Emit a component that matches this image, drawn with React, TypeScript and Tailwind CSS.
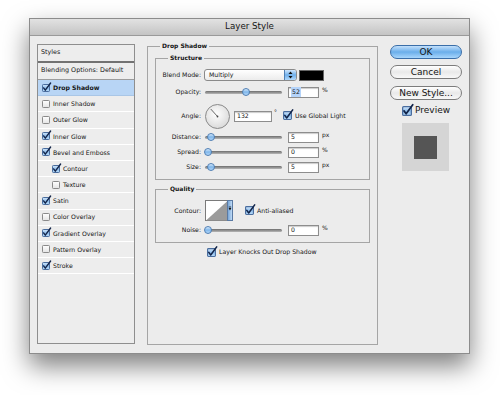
import React from "react";

const styles: { name: string; on: boolean; indent?: boolean; selected?: boolean }[] = [
  { name: "Drop Shadow", on: true, selected: true },
  { name: "Inner Shadow", on: false },
  { name: "Outer Glow", on: false },
  { name: "Inner Glow", on: true },
  { name: "Bevel and Emboss", on: true },
  { name: "Contour", on: true, indent: true },
  { name: "Texture", on: false, indent: true },
  { name: "Satin", on: true },
  { name: "Color Overlay", on: false },
  { name: "Gradient Overlay", on: true },
  { name: "Pattern Overlay", on: false },
  { name: "Stroke", on: true },
];

function Check({ on, size = 8 }: { on?: boolean; size?: number }) {
  return (
    <svg
      width={size}
      height={size}
      viewBox="0 0 8 8"
      className="shrink-0 overflow-visible"
    >
      <defs>
        <linearGradient id="cbOn" x1="0" y1="0" x2="0" y2="1">
          <stop offset="0" stopColor="#d6e9fb" />
          <stop offset="0.5" stopColor="#8dbdec" />
          <stop offset="1" stopColor="#b9dcfa" />
        </linearGradient>
        <linearGradient id="cbOff" x1="0" y1="0" x2="0" y2="1">
          <stop offset="0" stopColor="#ffffff" />
          <stop offset="1" stopColor="#e4e4e4" />
        </linearGradient>
      </defs>
      <rect
        x="0.5"
        y="0.5"
        width="7"
        height="7"
        rx="0.8"
        fill={on ? "url(#cbOn)" : "url(#cbOff)"}
        stroke={on ? "#4a6d9e" : "#8a8a8a"}
        strokeWidth="1"
      />
      {on && (
        <path
          d="M1.6 3.9 L3.3 6.2 L8.6 -1"
          fill="none"
          stroke="#122449"
          strokeWidth="1.4"
          strokeLinecap="round"
          strokeLinejoin="round"
        />
      )}
    </svg>
  );
}

function Slider({ pos }: { pos: number }) {
  return (
    <div className="relative ml-[3px] h-[8px] w-[78px]">
      <div className="absolute left-[1px] right-0 top-[2.5px] h-[3px] rounded-full bg-gradient-to-b from-[#6d6d6d] to-[#b8b8b8]" />
      <div
        className="absolute top-0 h-[8px] w-[8px] rounded-full border border-[#4f7fb4] bg-gradient-to-b from-[#d8ebfc] via-[#7fb6ea] to-[#b3d8fb]"
        style={{ left: pos }}
      />
    </div>
  );
}

function Field({ value, w = 31, selected }: { value: string; w?: number; selected?: boolean }) {
  return (
    <div
      className="flex h-[11px] items-center border border-[#8d8d8d] bg-white pl-[2px] text-[6.2px] shadow-[inset_0_1px_1px_rgba(0,0,0,0.2)]"
      style={{ width: w }}
    >
      {selected ? <span className="bg-[#b5d4fa] px-[1px]">{value}</span> : value}
    </div>
  );
}

function Label({ children }: { children: React.ReactNode }) {
  return (
    <div className="w-[45px] shrink-0 whitespace-nowrap text-right text-[6.2px]">
      {children}
    </div>
  );
}

function SliderRow({
  label,
  pos,
  value,
  unit,
  selected,
  className,
}: {
  label: string;
  pos: number;
  value: string;
  unit: string;
  selected?: boolean;
  className: string;
}) {
  return (
    <div className={`flex h-[12px] items-center ${className}`}>
      <Label>{label}</Label>
      <Slider pos={pos} />
      <div className="ml-[6px]">
        <Field value={value} selected={selected} />
      </div>
      <span className="ml-[3px] self-start text-[6px] leading-[8px]">{unit}</span>
    </div>
  );
}

function Dial() {
  const a = (132 * Math.PI) / 180;
  const x2 = 12.5 + Math.cos(a) * 10;
  const y2 = 12.5 - Math.sin(a) * 10;
  return (
    <svg width="25" height="25" viewBox="0 0 25 25" className="ml-[4px] shrink-0">
      <defs>
        <radialGradient id="dialG" cx="0.45" cy="0.4" r="0.6">
          <stop offset="0" stopColor="#ffffff" />
          <stop offset="1" stopColor="#dadada" />
        </radialGradient>
      </defs>
      <circle cx="12.5" cy="12.5" r="12" fill="url(#dialG)" stroke="#8a8a8a" strokeWidth="1" />
      <line x1="12.5" y1="12.5" x2={x2} y2={y2} stroke="#444" strokeWidth="0.8" />
      <circle cx="12.5" cy="12.5" r="0.9" fill="#444" />
    </svg>
  );
}

function ContourThumb() {
  return (
    <svg width="28" height="21" viewBox="0 0 28 21" className="ml-[4px] shrink-0">
      <defs>
        <linearGradient id="ctArrow" x1="0" y1="0" x2="1" y2="0">
          <stop offset="0" stopColor="#6f9fd4" />
          <stop offset="1" stopColor="#c9e2fa" />
        </linearGradient>
      </defs>
      <rect x="0.5" y="0.5" width="22" height="20" fill="#ffffff" stroke="#7a7a7a" />
      <polygon points="1,20.5 22.5,1 22.5,20.5" fill="#9b9b9b" />
      <rect x="22.5" y="0.5" width="5" height="20" fill="url(#ctArrow)" stroke="#5a7aa3" />
      <polygon points="23.6,8 26.4,8 25,10.6" fill="#111" />
      <line x1="23.8" y1="7" x2="26.2" y2="7" stroke="#111" strokeWidth="0.8" />
    </svg>
  );
}

function AquaButton({ children, primary, className }: { children: React.ReactNode; primary?: boolean; className: string }) {
  return (
    <div
      className={`flex h-[14px] w-[72px] items-center justify-center rounded-full border text-[9px] leading-none ${
        primary
          ? "border-[#3a6ea8] bg-gradient-to-b from-[#c3e0fb] via-[#6aaeea] to-[#a8d6fc]"
          : "border-[#7c7c7c] bg-gradient-to-b from-[#ffffff] via-[#e9e9e9] to-[#f8f8f8]"
      } ${className}`}
    >
      {children}
    </div>
  );
}

export default function App() {
  return (
    <div className="h-[395px] w-[500px] overflow-hidden bg-white pl-[29px] pt-[18px] font-['DejaVu_Sans','Liberation_Sans',sans-serif] text-[#151515]">
      <div className="flex h-[336px] w-[441px] flex-col border border-[#8c8c8c] bg-[#ececec] shadow-[0_12px_24px_rgba(0,0,0,0.5)]">
        {/* title bar */}
        <div className="flex h-[17px] shrink-0 items-center justify-center border-b border-[#9a9a9a] bg-gradient-to-b from-[#e2e2e2] to-[#c4c4c4] text-[8.7px]">
          Layer Style
        </div>

        <div className="flex items-start pl-[7px] pt-[6px]">
          {/* styles list */}
          <div className="mt-[2px] h-[300px] w-[98px] shrink-0 border border-[#8e8e8e] bg-[#ededed]">
            <div className="flex h-[18px] items-center border-b-2 border-[#727272] pl-[3px] text-[6.4px]">
              Styles
            </div>
            <div className="flex h-[17px] items-center border-b border-[#9c9c9c] pl-[3px] text-[6.4px]">
              Blending Options: Default
            </div>
            {styles.map((s) => (
              <div
                key={s.name}
                className={`flex h-[16.2px] items-center gap-[3px] border-b ${
                  s.selected ? "border-[#a9c6e6] bg-[#b8d5f5] font-bold" : "border-white"
                } ${s.indent ? "pl-[14px]" : "pl-[4px]"} text-[6.2px]`}
              >
                <Check on={s.on} />
                <span className="whitespace-nowrap">{s.name}</span>
              </div>
            ))}
          </div>

          {/* drop shadow panel */}
          <fieldset className="ml-[12px] h-[303px] w-[231px] shrink-0 border border-[#a5a5a5] px-0">
            <legend className="ml-[12px] px-[2px] text-[6px] font-bold leading-[8px]">Drop Shadow</legend>

            <fieldset className="ml-[7px] mt-[4px] w-[215px] border border-[#a5a5a5] px-0 pb-[6px] pt-[7px]">
              <legend className="ml-[12px] px-[2px] text-[6px] font-bold leading-[8px]">Structure</legend>

              <div className="flex h-[12px] items-center">
                <Label>Blend Mode:</Label>
                <div className="ml-[3px] flex h-[12px] w-[93px] items-center overflow-hidden rounded-[3px] border border-[#8a8a8a] bg-gradient-to-b from-white to-[#ececec]">
                  <span className="flex-1 pl-[4px] text-[6.2px]">Multiply</span>
                  <div className="flex h-full w-[12px] flex-col items-center justify-center border-l border-[#4f7fb4] bg-gradient-to-b from-[#cfe6fc] via-[#6fb0ec] to-[#b0d8fb]">
                    <svg width="5" height="8" viewBox="0 0 5 8">
                      <polygon points="2.5,0.5 4.5,3 0.5,3" fill="#111" />
                      <polygon points="0.5,5 4.5,5 2.5,7.5" fill="#111" />
                    </svg>
                  </div>
                </div>
                <div className="ml-[2px] h-[11px] w-[25px] border border-[#666] bg-black" />
              </div>

              <SliderRow label="Opacity:" pos={38} value="52" unit="%" selected className="mt-[5px]" />

              <div className="mt-[5px] flex h-[26px] items-center">
                <Label>Angle:</Label>
                <Dial />
                <div className="ml-[4px]">
                  <Field value="132" w={38} />
                </div>
                <span className="ml-[2px] self-start pt-[6px] text-[6px] leading-[6px]">°</span>
                <div className="ml-[6px] flex items-center gap-[3px]">
                  <Check on size={9} />
                  <span className="whitespace-nowrap text-[6.2px]">Use Global Light</span>
                </div>
              </div>

              <SliderRow label="Distance:" pos={3} value="5" unit="px" className="mt-[2px]" />
              <SliderRow label="Spread:" pos={0} value="0" unit="%" className="mt-[3px]" />
              <SliderRow label="Size:" pos={3} value="5" unit="px" className="mt-[3px]" />
            </fieldset>

            <fieldset className="ml-[7px] mt-[5px] w-[215px] border border-[#a5a5a5] px-0 pb-[6px] pt-[7px]">
              <legend className="ml-[12px] px-[2px] text-[6px] font-bold leading-[8px]">Quality</legend>
              <div className="flex h-[21px] items-center">
                <Label>Contour:</Label>
                <ContourThumb />
                <div className="ml-[12px] flex items-center gap-[3px]">
                  <Check on size={9} />
                  <span className="whitespace-nowrap text-[6.2px]">Anti-aliased</span>
                </div>
              </div>
              <SliderRow label="Noise:" pos={0} value="0" unit="%" className="mt-[3px]" />
            </fieldset>

            <div className="mt-[4px] flex h-[10px] items-center gap-[3px] pl-[59px]">
              <Check on size={9} />
              <span className="whitespace-nowrap text-[6.2px]">Layer Knocks Out Drop Shadow</span>
            </div>
          </fieldset>

          {/* buttons */}
          <div className="ml-[12px] flex w-[72px] shrink-0 flex-col">
            <AquaButton primary className="mt-[3px]">OK</AquaButton>
            <AquaButton className="mt-[6px]">Cancel</AquaButton>
            <AquaButton className="mt-[7px]">New Style...</AquaButton>
            <div className="mt-[6px] flex h-[10px] items-center gap-[3px] pl-[12px] text-[9px]">
              <Check on size={10} />
              <span>Preview</span>
            </div>
            <div className="ml-[12px] mt-[7px] flex h-[48px] w-[47px] items-center justify-center bg-[#d5d5d5]">
              <div className="h-[23px] w-[23px] bg-[#555555]" />
            </div>
          </div>
        </div>
      </div>
    </div>
  );
}
